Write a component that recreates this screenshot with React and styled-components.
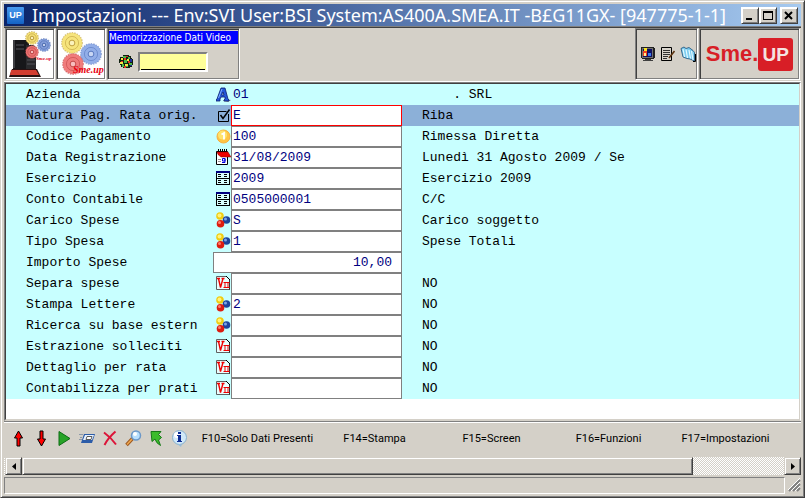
import React from "react";
import styled, { createGlobalStyle, css } from "styled-components";

const face = "#d4d0c8";
const titleFont = '"Noto Sans", "Open Sans", sans-serif';
const sans = 'Roboto, "Liberation Sans", sans-serif';
const condensed = '"DejaVu Sans Condensed", "Liberation Sans", sans-serif';
const mono = '"Liberation Mono", monospace';

const GlobalStyle = createGlobalStyle`
  * { box-sizing: border-box; }
  body { margin: 0; background: ${face}; }
  svg { display: block; flex: none; }
  button { font: inherit; margin: 0; padding: 0; }
`;

const sunken = css`
  border: 1px solid;
  border-color: #808080 #ffffff #ffffff #808080;
  box-shadow: inset 1px 1px 0 #404040, inset -1px -1px 0 #808080;
`;

const raised = css`
  border: 1px solid;
  border-color: ${face} #404040 #404040 ${face};
  box-shadow: inset 1px 1px 0 #ffffff, inset -1px -1px 0 #808080;
  background: ${face};
`;

const Window = styled.div`
  min-height: 100vh;
  display: flex;
  flex-direction: column;
  padding: 3px;
  ${raised}
`;

const TitleBar = styled.header`
  height: 22px;
  display: flex;
  align-items: center;
  padding: 0 3px;
  background: linear-gradient(90deg, #0a246a, #a6caf0);
  color: #ffffff;
  font-family: ${titleFont};
`;

const Title = styled.h1`
  flex: 1;
  min-width: 0;
  margin: 0 0 0 8px;
  font-size: 18px;
  line-height: 22px;
  font-weight: normal;
  white-space: nowrap;
  overflow: hidden;
`;

const CaptionButton = styled.button`
  width: 18px;
  height: 17px;
  display: grid;
  place-items: center;
  margin-left: ${(p) => (p.$apart ? "3px" : "0")};
  ${raised}
  border-color: #ffffff #404040 #404040 #ffffff;
`;

const ToolStrip = styled.div`
  display: flex;
  justify-content: space-between;
  padding: 1px 1px 0;
  height: 56px;
  border-top: 1px solid #808080;
  border-bottom: 1px solid #ffffff;
  box-shadow: inset 0 1px 0 #404040;
`;

const Group = styled.div`
  display: flex;
  gap: 1px;
`;

const Panel = styled.div`
  width: ${(p) => p.$width}px;
  height: 52px;
  padding: 1px;
  display: flex;
  flex-direction: ${(p) => (p.$stack ? "column" : "row")};
  align-items: ${(p) => (p.$stack ? "stretch" : "center")};
  justify-content: ${(p) => p.$justify || "flex-start"};
  gap: ${(p) => p.$gap || 0}px;
  ${sunken}
`;

const PictureButton = styled.button`
  border: 0;
  background: #ffffff;
`;

const IconButton = styled.button`
  width: ${(p) => p.$width || 16}px;
  height: 20px;
  display: grid;
  place-items: center;
  border: 0;
  background: none;
`;

const MemoLabel = styled.label`
  margin-top: 1px;
  background: #0000ff;
  color: #ffffff;
  font: 10px/13px ${condensed};
  white-space: nowrap;
`;

const MemoRow = styled.div`
  display: flex;
  align-items: center;
  gap: 4px;
  padding: 8px 0 0 9px;
`;

const MemoInput = styled.input`
  width: 70px;
  height: 20px;
  padding: 0 2px;
  background: linear-gradient(#000000, #000000) 1px 15px / 64px 1px no-repeat #ffff99;
  border: 2px solid;
  border-color: #808080 #ffffff #ffffff #808080;
  border-radius: 0;
  font: 11px ${sans};
`;

const Logo = styled.div`
  display: flex;
  align-items: center;
  color: #d81e26;
  font: bold 22px/34px "Liberation Sans", Arial, sans-serif;
`;

const LogoTile = styled.span`
  width: 35px;
  height: 33px;
  border-radius: 3px;
  background: #d81e26;
  color: #f4e4e0;
  font-size: 19px;
  line-height: 33px;
  text-align: center;
`;

const Client = styled.main`
  flex: 1;
  display: flex;
  background: #ffffff;
  border: 1px solid;
  border-color: #808080 #ffffff ${face} #808080;
`;

const Form = styled.form`
  flex: 1;
  min-width: 0;
  border: 1px solid;
  border-color: #404040 ${face} ${face} #404040;
`;

const Row = styled.div`
  display: grid;
  grid-template-columns: 207px 18px 171px minmax(0, 1fr);
  height: 21px;
  background: ${(p) => (p.$active ? "#8cb0d8" : "#c8ffff")};
  font: 13px/21px ${mono};
  color: #000000;
  white-space: pre;
`;

const RowLabel = styled.label`
  padding-left: 20px;
`;

const IconCell = styled.span`
  display: flex;
  align-items: center;
  height: 20px;
  padding-left: 3px;
`;

const Field = styled.input`
  grid-column: ${(p) => (p.$wide ? "2 / 4" : "3")};
  width: 100%;
  height: 21px;
  border: 1px solid ${(p) => (p.$active ? "#ff0000" : "#808080")};
  border-radius: 0;
  padding: 0 ${(p) => (p.$wide ? "9px" : "1px")};
  background: #ffffff;
  color: #000080;
  font: 13px/19px ${mono};
  text-align: ${(p) => (p.$wide ? "right" : "left")};
  outline: none;
  ${(p) =>
    p.readOnly &&
    css`
      background: transparent;
      border-color: transparent;
    `}
`;

const Description = styled.span`
  padding-left: 20px;
  overflow: hidden;
`;

const CommandBar = styled.footer`
  display: flex;
  align-items: center;
  height: 36px;
  padding: 0 17px 2px 3px;
  border-top: 1px solid #808080;
  box-shadow: inset 0 1px 0 #ffffff;
`;

const Tools = styled.div`
  display: flex;
  width: 192px;
`;

const Keys = styled.div`
  flex: 1;
  display: grid;
  grid-template-columns: repeat(5, 1fr);
`;

const KeyButton = styled.button`
  border: 0;
  background: none;
  color: #000000;
  font: 11px/20px ${sans};
  white-space: nowrap;
`;

const ScrollBar = styled.div`
  display: flex;
  height: 18px;
  padding-left: 1px;
  background: repeating-conic-gradient(#ffffff 0 25%, ${face} 0 50%) 0 0 / 2px 2px;
`;

const ScrollButton = styled.button`
  width: 17px;
  display: grid;
  place-items: center;
  ${raised}
`;

const ScrollTrack = styled.div`
  flex: 1;
  display: flex;
`;

const ScrollThumb = styled.div`
  width: 88%;
  ${raised}
`;

const StatusBar = styled.div`
  display: flex;
  gap: 3px;
  height: 17px;
  margin-top: 2px;
`;

const StatusPane = styled.div`
  flex: 1;
  border: 1px solid;
  border-color: #808080 #ffffff #ffffff #808080;
`;

const Gear = ({ x, y, r, fill, edge }) => (
  <g transform={`translate(${x} ${y})`}>
    <circle r={r - 0.8} fill={fill} stroke={edge} strokeOpacity="0.6" strokeWidth="1.500" strokeDasharray="1.500 1" />
    <circle r={r - 1.2} fill={fill} />
    <circle r={r * 0.6} fill="none" stroke={edge} strokeOpacity="0.6" strokeWidth="1" />
    <circle r={r * 0.26} fill="#ffffff" fillOpacity="0.5" stroke={edge} strokeWidth="1" />
  </g>
);

const ServerPicture = () => (
  <svg width="46" height="48" viewBox="0 0 46 48">
    <rect width="46" height="48" fill="#fff" />
    <path d="M6 10h13l3 3v27H6z" fill="#17171a" />
    <path d="M19 15h7l3 2v22H19z" fill="#29292c" />
    <path d="M9 15h8M9 19h8M20 30h8M20 34h8" stroke="#55555a" />
    <path d="M6 10h2v28H6z" fill="#3e3e42" />
    <Gear x={25} y={8} r={7} fill="#f5e178" edge="#b89838" />
    <Gear x={37} y={15} r={7} fill="#86a0dc" edge="#4868ac" />
    <Gear x={25} y={22} r={7} fill="#ee7676" edge="#b84040" />
    <path d="M5 39h25l4 8H2z" fill="#2a1010" />
    <path d="M4 40h25l3 5H3z" fill="#d23c30" />
    <text x="29" y="30" fill="#e00018" fontFamily="Liberation Serif" fontSize="5" fontWeight="bold" fontStyle="italic">Sme.up</text>
  </svg>
);

const GearsPicture = () => (
  <svg width="46" height="48" viewBox="0 0 46 48">
    <rect width="46" height="48" fill="#fff" />
    <Gear x={14} y={13} r={11} fill="#f6e47c" edge="#c0a040" />
    <Gear x={33} y={24} r={11} fill="#92aee8" edge="#5878c0" />
    <Gear x={15} y={34} r={11} fill="#f07c7c" edge="#c44848" />
    <text x="15" y="43" fill="#e80010" fontFamily="Liberation Serif" fontSize="10" fontWeight="bold" fontStyle="italic">Sme.up</text>
  </svg>
);

const Globe = () => (
  <svg width="16" height="16" viewBox="0 0 16 16" shapeRendering="crispEdges">
    <path d="M5 1h6v1h2v2h1v1h1v6h-1v2h-2v1H5v-1H3v-2H2V9H1V5h1V3h3z" fill="#102010" />
    <path d="M5 2h3v2H5zM10 3h2v2h-2zM6 6h3v3H6zM11 9h3v2h-3zM4 10h2v3H4zM8 12h2v1H8z" fill="#48b848" />
    <path d="M3 4h2v2H3zM9 5h2v2H9zM2 8h3v2H2zM7 10h3v2H7z" fill="#f8e840" />
    <path d="M8 2h2v1H8zM6 4h2v2H6zM3 7h2v1H3zM10 7h2v2h-2zM6 12h2v2H6z" fill="#e03020" />
    <path d="M12 5h2v3h-2zM12 11h2v1h-2z" fill="#2030a0" />
  </svg>
);

const Monitor = () => (
  <svg width="14" height="15" viewBox="0 0 14 15" shapeRendering="crispEdges">
    <path d="M0 0h13v1h1v10h-1v1H1v-1H0z" fill="#202020" />
    <path d="M1 1h11v10H1z" fill="#707070" />
    <path d="M2 2h9v8H2z" fill="#101060" />
    <path d="M3 1h3v3H3z" fill="#ffe820" />
    <path d="M2 4h4v5H2z" fill="#f04020" />
    <path d="M3 6h2v3H3z" fill="#fff090" />
    <path d="M7 6h3v3H7z" fill="#3878f0" />
    <path d="M4 12h6v1h2v1H2v-1h2z" fill="#404040" />
  </svg>
);

const Notepad = () => (
  <svg width="14" height="14" viewBox="0 0 14 14">
    <path d="M.5.5h10v13H.5z" fill="#d8d4cc" stroke="#000" />
    <path d="M2 3.500h7M2 5.500h7M2 7.500h7M2 9.500h5M2 11.500h4" stroke="#333" />
    <path d="M13.500 4 8 11" stroke="#5c3310" strokeWidth="1.600" />
  </svg>
);

const Books = () => (
  <svg width="16" height="16" viewBox="0 0 16 16">
    <path d="M1 2.500 4 1l2 1.500L9 1.500l4 3 1.500 2v8.500L10 13l-3-.5L3 11z" fill="#7cccf0" stroke="#1a4f78" strokeWidth=".8" />
    <path d="M3 3l1.500 8M6 3.500l1.500 8.500M9 4l1.500 8.500M11.500 5l1.500 9" stroke="#e4faff" strokeWidth="1.200" />
    <path d="M15.500 8v7.500H13" fill="none" stroke="#000" />
  </svg>
);

const AppIcon = () => (
  <svg width="17" height="17" viewBox="0 0 17 17">
    <defs>
      <linearGradient id="app" x2="0" y2="1">
        <stop stopColor="#4a9cf0" />
        <stop offset="1" stopColor="#1462c4" />
      </linearGradient>
    </defs>
    <rect width="17" height="17" rx="1" fill="url(#app)" />
    <text x="8.500" y="11" textAnchor="middle" fill="#fff" fontFamily="Liberation Sans" fontSize="9" fontWeight="bold">UP</text>
  </svg>
);

const RowIcons = {
  letter: () => (
    <svg width="15" height="15" viewBox="0 0 15 15">
      <path d="M9 12l6 1-3 2-5-1z" fill="#808890" />
      <path d="M5 1h4l3 11 1 1v1H8v-1l1-1v-2H5l-1 2v2H0v-1l1-1zM7 5 5.500 8H8z" fill="#2458d8" stroke="#0a1c70" strokeWidth=".8" />
      <path d="M6 2 2.500 11" stroke="#80b0ff" />
    </svg>
  ),
  check: () => (
    <svg width="15" height="15" viewBox="0 0 15 15">
      <path d="M12.500 6v7.500h-10v-10h8" fill="none" stroke="#000" />
      <path d="M4.500 7 7 10.500 13.500 1.500" fill="none" stroke="#000" strokeWidth="1.500" />
    </svg>
  ),
  coin: () => (
    <svg width="15" height="15" viewBox="0 0 15 15">
      <circle cx="7.500" cy="7.500" r="6.500" fill="#ffc444" stroke="#f6b040" />
      <circle cx="6.500" cy="6" r="4.500" fill="#ffe36c" />
      <path d="M5.500 5.500 8 4v6.500" fill="none" stroke="#fff" strokeWidth="1.800" />
    </svg>
  ),
  calendar: () => (
    <svg width="15" height="16" viewBox="0 0 15 16">
      <path d="M.5 2.500h11v13H.5z" fill="#fff" stroke="#000" />
      <path d="M2.500 0v3M4.500 0v3M6.500 0v3M8.500 0v3M10.500 0v3" stroke="#000" />
      <path d="M1 3h11l3 5H5L2 5.500z" fill="#f00000" stroke="#800000" strokeWidth=".5" />
      <path d="M9 9.500H6.500V12H9V9.500v4H6" fill="none" stroke="#0000e0" />
      <path d="M2 10.500h3M2 12.500h3" stroke="#909090" />
    </svg>
  ),
  table: () => (
    <svg width="14" height="14" viewBox="0 0 14 14" shapeRendering="crispEdges">
      <path d="M0 0h14v14H0z" fill="#000" />
      <path d="M0 0h14v2H0z" fill="#000080" />
      <path d="M1 2h12v5H1zM1 8h12v5H1z" fill="#d8ffff" />
      <path d="M2 3.500h4M8 3.500h4M2 5.500h4M8 5.500h4M2 9.500h4M8 9.500h4M2 11.500h4M8 11.500h4" stroke="#000" strokeDasharray="3 1" />
    </svg>
  ),
  balls: () => (
    <svg width="15" height="16" viewBox="0 0 15 16">
      <circle cx="4" cy="4" r="3.800" fill="#f0cc10" />
      <circle cx="3.500" cy="3.500" r="2" fill="#fff27c" />
      <circle cx="10.500" cy="8" r="3.800" fill="#1c449c" />
      <circle cx="9.500" cy="7" r="1.500" fill="#7ca4e8" />
      <circle cx="4.500" cy="11.800" r="3.800" fill="#dc1c10" />
      <circle cx="3.500" cy="10.500" r="1.500" fill="#ff7c6c" />
    </svg>
  ),
  vii: () => (
    <svg width="14" height="14" viewBox="0 0 14 14">
      <path d="M.5.5h10l3 3v10H.5z" fill="#e8ffff" stroke="#606060" />
      <path d="M10 0l4 4v10" fill="none" stroke="#000" />
      <path d="M1 2.500h3M5.500 2.500h3M2.500 2.500l2 9 2.500-9" fill="none" stroke="#f00000" strokeWidth="1.400" />
      <path d="M7.500 6.500h6M7.500 11.500h6M9 6.500v5M12 6.500v5" stroke="#f00000" />
    </svg>
  ),
};

const ToolIcon = ({ children }) => (
  <svg width="17" height="17" viewBox="0 0 17 17">{children}</svg>
);

const tools = [
  ["Su", <path key="a" d="M8.500 1 12.500 8H10v8H7V8H4.500z" fill="#f00" stroke="#000" />],
  ["Giù", <path key="a" d="M8.500 16 12.500 9H10V1H7v8H4.500z" fill="#f00" stroke="#000" />],
  ["Esegui", <path key="a" d="M3 1.500v14l11-7z" fill="#28a428" stroke="#0c6c14" />],
  ["Pulisci", <g key="a">
    <path d="M5 4h11l-3 9H2z" fill="#2c5ca8" /><path d="M6 5h9l-2 5H4z" fill="#e8f2ff" />
    <path d="M8 6.500h5l-1 3H7z" fill="#fff" stroke="#5c5c5c" /><path d="M0 4.500h4M1 7.500h2M0 9.500h3" stroke="#8c98a8" />
  </g>],
  ["Annulla", <path key="a" d="M2 2.500q7 5 12 12M13.500 1.500Q6 8 2.500 15" fill="none" stroke="#dc1438" strokeWidth="2" />],
  ["Cerca", <g key="a">
    <path d="M8 8 1.500 15" stroke="#9c5820" strokeWidth="3.500" /><path d="M7 9 2 14.500" stroke="#f0a850" strokeWidth="1.500" />
    <circle cx="11" cy="5.500" r="4.500" fill="#b8e0ff" stroke="#6c98c8" strokeWidth="1.500" /><circle cx="10" cy="4" r="2" fill="#fff" />
  </g>],
  ["Vai", <path key="a" d="M3 1.500h10L10.500 4.500l3 3-3 2.500 2 5.500Q8 13 7 9l-3 2.500z" fill="#3cbc2c" stroke="#187818" />],
  ["Informazioni", <g key="a">
    <circle cx="8.500" cy="7.500" r="7" fill="#d0e8f8" stroke="#88b0cc" /><path d="M6 14h5l-1 3z" fill="#98bcd8" />
    <circle cx="6" cy="5" r="3" fill="#fff" />
    <path d="M7 2h3v2H7zM6 5h4v6h1v1H6v-1h1V6H6z" fill="#0c2c94" />
  </g>],
];

const rows = [
  { label: "Azienda", icon: "letter", value: "01", text: "    . SRL", readOnly: true },
  { label: "Natura Pag. Rata orig.", icon: "check", value: "E", text: "Riba", active: true },
  { label: "Codice Pagamento", icon: "coin", value: "100", text: "Rimessa Diretta" },
  { label: "Data Registrazione", icon: "calendar", value: "31/08/2009", text: "Lunedì 31 Agosto 2009 / Se" },
  { label: "Esercizio", icon: "table", value: "2009", text: "Esercizio 2009" },
  { label: "Conto Contabile", icon: "table", value: "0505000001", text: "C/C" },
  { label: "Carico Spese", icon: "balls", value: "S", text: "Carico soggetto" },
  { label: "Tipo Spesa", icon: "balls", value: "1", text: "Spese Totali" },
  { label: "Importo Spese", value: "10,00", text: "" },
  { label: "Separa spese", icon: "vii", value: "", text: "NO" },
  { label: "Stampa Lettere", icon: "balls", value: "2", text: "NO" },
  { label: "Ricerca su base estern", icon: "balls", value: "", text: "NO" },
  { label: "Estrazione solleciti", icon: "vii", value: "", text: "NO" },
  { label: "Dettaglio per rata", icon: "vii", value: "", text: "NO" },
  { label: "Contabilizza per prati", icon: "vii", value: "", text: "NO" },
];

const keys = ["F10=Solo Dati Presenti", "F14=Stampa", "F15=Screen", "F16=Funzioni", "F17=Impostazioni"];

function FormRow({ row, id }) {
  const Icon = RowIcons[row.icon];
  return (
    <Row $active={row.active}>
      <RowLabel htmlFor={id}>{row.label}</RowLabel>
      {Icon && <IconCell><Icon /></IconCell>}
      <Field id={id} defaultValue={row.value} readOnly={row.readOnly} $active={row.active} $wide={!Icon} />
      <Description>{row.text}</Description>
    </Row>
  );
}

export default function App() {
  return (
    <>
      <GlobalStyle />
      <Window>
        <TitleBar>
          <AppIcon />
          <Title>Impostazioni. --- Env:SVI User:BSI System:AS400A.SMEA.IT -B£G11GX- [947775-1-1]</Title>
          <CaptionButton aria-label="Riduci">
            <svg width="10" height="9"><path d="M1 7h6v2H1z" /></svg>
          </CaptionButton>
          <CaptionButton aria-label="Ingrandisci">
            <svg width="10" height="9"><path d="M0 0h10v9H0zM1 2v6h8V2z" fillRule="evenodd" /></svg>
          </CaptionButton>
          <CaptionButton aria-label="Chiudi" $apart>
            <svg width="10" height="9"><path d="M1 1l7 7M8 1 1 8" stroke="#000" strokeWidth="2" /></svg>
          </CaptionButton>
        </TitleBar>
        <ToolStrip>
          <Group>
            <Panel $width={50}><PictureButton aria-label="Server"><ServerPicture /></PictureButton></Panel>
            <Panel $width={50}><PictureButton aria-label="Sistema"><GearsPicture /></PictureButton></Panel>
            <Panel $width={133} $stack>
              <MemoLabel htmlFor="memo">Memorizzazione Dati Video</MemoLabel>
              <MemoRow>
                <IconButton aria-label="Memorizza"><Globe /></IconButton>
                <MemoInput id="memo" />
              </MemoRow>
            </Panel>
          </Group>
          <Group>
            <Panel $width={63} $gap={4} $justify="flex-end">
              <IconButton aria-label="Video"><Monitor /></IconButton>
              <IconButton aria-label="Note"><Notepad /></IconButton>
              <IconButton aria-label="Archivio"><Books /></IconButton>
            </Panel>
            <Panel $width={101} $justify="center">
              <Logo>Sme.<LogoTile>UP</LogoTile></Logo>
            </Panel>
          </Group>
        </ToolStrip>
        <Client>
          <Form>
            {rows.map((row, i) => <FormRow key={row.label} row={row} id={`field-${i}`} />)}
          </Form>
        </Client>
        <CommandBar>
          <Tools>
            {tools.map(([name, drawing]) => (
              <IconButton key={name} aria-label={name} $width={23}><ToolIcon>{drawing}</ToolIcon></IconButton>
            ))}
          </Tools>
          <Keys>
            {keys.map((key) => <KeyButton key={key}>{key}</KeyButton>)}
          </Keys>
        </CommandBar>
        <ScrollBar>
          <ScrollButton aria-label="Scorri a sinistra"><svg width="4" height="7"><path d="M4 0v7L0 3.500z" /></svg></ScrollButton>
          <ScrollTrack><ScrollThumb /></ScrollTrack>
          <ScrollButton aria-label="Scorri a destra"><svg width="4" height="7"><path d="M0 0v7l4-3.500z" /></svg></ScrollButton>
        </ScrollBar>
        <StatusBar>
          <StatusPane />
          <svg width="13" height="15" viewBox="0 0 13 15">
            <path d="M1 14 12 3M5 14l7-7M9 14l3-3" stroke="#808080" strokeWidth="2" />
            <path d="M0 13 12 1M3 14l9-9M7 14l5-5" stroke="#fff" />
          </svg>
        </StatusBar>
      </Window>
    </>
  );
}
